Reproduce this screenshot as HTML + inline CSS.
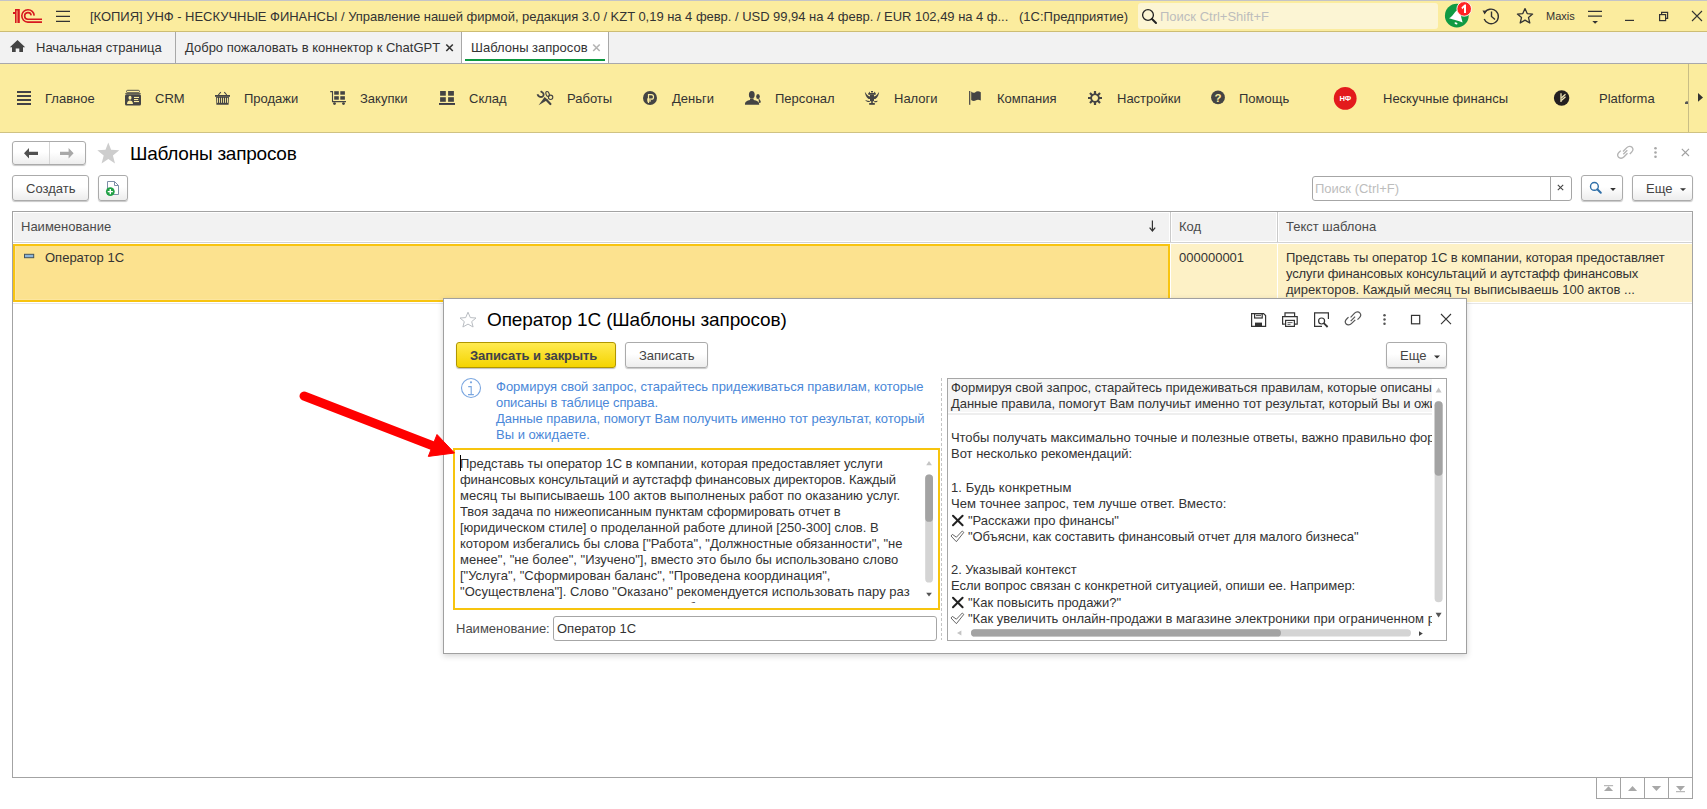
<!DOCTYPE html>
<html><head><meta charset="utf-8">
<style>
*{box-sizing:border-box;margin:0;padding:0}
html,body{width:1707px;height:809px;overflow:hidden;background:#fff;font-family:"Liberation Sans",sans-serif;font-size:13px;color:#333}
.a{position:absolute}
.t{position:absolute;white-space:nowrap;line-height:16px}
svg{position:absolute;overflow:visible}
.sec{position:absolute;top:90px;white-space:nowrap;line-height:16px;color:#333}
.btn{position:absolute;border:1px solid #ABABAB;border-radius:3px;background:linear-gradient(#FFFFFF 0%,#FFFFFF 45%,#EDEDED 100%);box-shadow:0 1px 1px rgba(0,0,0,.22)}
.ic{fill:#404040}
</style></head><body>
<!--TITLE-->
<div class="a" style="left:0;top:0;width:1707px;height:1px;background:#C4C4C8"></div>
<div class="a" style="left:0;top:1px;width:1707px;height:30px;background:#FBEC9E"></div>
<div class="a" style="left:0;top:31px;width:1707px;height:1px;background:#CDBD74"></div>
<svg width="1" height="1" style="left:0;top:0">
 <g fill="#D71920">
  <path d="M15 12.2 V23 H16.6 V10.4 H17.4 V23 H19.8 V9 H15 Z M13 12.1 H15 V14 H13 Z"/>
 </g>
 <g fill="none" stroke="#D71920" stroke-width="1.6">
  <path d="M34.2 15.6 A6.2 6.2 0 1 0 27.8 22.1 H42"/>
  <path d="M31.2 15.4 A3.3 3.3 0 1 0 27.8 19.2 H42"/>
 </g>
 <g stroke="#333" stroke-width="1.3">
  <path d="M56 11.4 H70 M56 16.4 H70 M56 21.4 H70"/>
 </g>
</svg>
<div class="t" style="left:90px;top:9px;color:#333;letter-spacing:-0.03px">[КОПИЯ] УНФ - НЕСКУЧНЫЕ ФИНАНСЫ / Управление нашей фирмой, редакция 3.0 / KZT 0,19 на 4 февр. / USD 99,94 на 4 февр. / EUR 102,49 на 4 ф...</div>
<div class="t" style="left:1019px;top:9px;color:#333">(1С:Предприятие)</div>
<div class="a" style="left:1138px;top:3px;width:300px;height:26px;background:#FCF5D4;border-radius:3px"></div>
<svg width="1" height="1" style="left:0;top:0">
 <circle cx="1148" cy="15" r="5.4" fill="none" stroke="#222" stroke-width="1.3"/>
 <path d="M1152 19 L1156 23" stroke="#222" stroke-width="2" stroke-linecap="round"/>
</svg>
<div class="t" style="left:1160px;top:9px;color:#BDBDBD">Поиск Ctrl+Shift+F</div>
<svg width="1" height="1" style="left:0;top:0">
 <circle cx="1456.8" cy="15.7" r="11.9" fill="#109A43"/>
 <path d="M1449 18.2 C1451.5 17.4 1453.2 14.6 1455 12.2 C1456 10.6 1458 9.8 1459.5 10.5 L1462.6 22.4 C1458.5 20.6 1453.5 19.6 1449 18.2 Z" fill="#fff"/>
 <ellipse cx="1456" cy="23.3" rx="1.6" ry="0.9" transform="rotate(22 1456 23.3)" fill="#fff"/>
 <circle cx="1464.2" cy="8.9" r="7.3" fill="#FF2222" stroke="#fff" stroke-width="0.9"/>
 <path d="M1461.4 7.6 L1464.6 4.6 H1466 V13 H1464 V7.6 L1462.3 9.2 Z" fill="#fff"/>
 <g fill="none" stroke="#333" stroke-width="1.4">
  <path d="M1484.6 13 A7.3 7.3 0 1 1 1484.2 19"/>
  <path d="M1491.5 11.5 V16.5 L1495 19.5"/>
 </g>
 <path d="M1482.5 10.5 L1486.8 10.8 L1484.6 14.5 Z" fill="#333"/>
 <path d="M1525 8.6 L1527.2 13.6 L1532.6 14.1 L1528.5 17.6 L1529.8 23 L1525 20.1 L1520.2 23 L1521.5 17.6 L1517.4 14.1 L1522.8 13.6 Z" fill="none" stroke="#333" stroke-width="1.3" stroke-linejoin="round"/>
 <g stroke="#333" stroke-width="1.2">
  <path d="M1588 11.4 H1602 M1588 16.2 H1602"/>
  <path d="M1625 20.4 H1634"/>
  <path d="M1692 11 L1702 21 M1702 11 L1692 21" stroke-width="1.1"/>
 </g>
 <path d="M1592.3 21 H1598 L1595.1 23.8 Z" fill="#333"/>
 <g fill="none" stroke="#333" stroke-width="1.2">
  <rect x="1659.6" y="14.6" width="6" height="6"/>
  <path d="M1661.6 14.6 V12.4 H1667.6 V18.4 H1665.6"/>
 </g>
</svg>
<div class="t" style="left:1546px;top:8px;font-size:11px;color:#333">Maxis</div>
<!--/TITLE-->
<!--TABS-->
<div class="a" style="left:0;top:32px;width:1707px;height:31px;background:#F2F2F2"></div>
<div class="a" style="left:0;top:63px;width:1707px;height:1px;background:#A8A8AC"></div>
<svg width="1" height="1" style="left:0;top:0">
 <path d="M17.5 40 L25.2 47.3 H23 V52 H19.3 V48.4 H15.7 V52 H12 V47.3 H9.8 Z" fill="#444"/>
</svg>
<div class="t" style="left:36px;top:40px;color:#333">Начальная страница</div>
<div class="a" style="left:175px;top:32px;width:1px;height:31px;background:#A8A8A8"></div>
<div class="t" style="left:185px;top:40px;color:#333">Добро пожаловать в коннектор к ChatGPT</div>
<svg width="1" height="1" style="left:0;top:0">
 <path d="M446.3 44.5 L452.8 51 M452.8 44.5 L446.3 51" stroke="#333" stroke-width="1.6"/>
</svg>
<div class="a" style="left:462px;top:32px;width:146px;height:31px;background:#fff"></div>
<div class="a" style="left:461px;top:32px;width:1px;height:31px;background:#A8A8A8"></div>
<div class="t" style="left:471px;top:40px;color:#333">Шаблоны запросов</div>
<svg width="1" height="1" style="left:0;top:0">
 <path d="M593.2 44.5 L599.7 51 M599.7 44.5 L593.2 51" stroke="#B4B4B4" stroke-width="1.6"/>
</svg>
<div class="a" style="left:465px;top:59px;width:140px;height:2px;background:#0D9840"></div>
<div class="a" style="left:608px;top:32px;width:1px;height:31px;background:#A8A8A8"></div>
<!--/TABS-->
<!--SECTIONS-->
<div class="a" style="left:0;top:64px;width:1707px;height:68px;background:#FBEC9E"></div>
<svg width="1" height="1" style="left:0;top:0">
 <g fill="#424246">
  <rect x="17" y="91" width="14" height="2"/><rect x="17" y="95" width="14" height="2"/><rect x="17" y="99" width="14" height="2"/><rect x="17" y="103" width="14" height="2"/>
 </g>
 <!-- CRM -->
 <g>
  <rect x="126.5" y="90.3" width="13" height="2.4" rx="1.2" fill="none" stroke="#444" stroke-width="0.9"/>
  <path d="M125.3 93.6 H140.7" stroke="#444" stroke-width="0.9"/>
  <rect x="125" y="94.2" width="16" height="11.4" rx="1.5" fill="#444"/>
  <ellipse cx="130" cy="97.8" rx="1.5" ry="2" fill="#FBEC9E"/>
  <path d="M127 104 C127 101.5 128.5 100.5 130 100.5 C131.5 100.5 133 101.5 133 104 Z" fill="#FBEC9E"/>
  <rect x="134" y="96.9" width="5" height="1.1" fill="#FBEC9E"/><rect x="134" y="99" width="4.2" height="1.1" fill="#FBEC9E"/><rect x="134" y="101" width="5" height="1.1" fill="#FBEC9E"/>
 </g>
 <!-- basket -->
 <g fill="#444">
  <path d="M218.3 95 L220.8 92.2 M224.3 92.2 L226.8 95" stroke="#444" stroke-width="1.1" fill="none"/>
  <rect x="215" y="95" width="15" height="1.8"/>
  <path d="M216.1 96.7 H228.9 L228.6 104.8 H216.4 Z"/>
  <g fill="#FBEC9E"><rect x="217" y="97.8" width="0.9" height="5"/><rect x="219" y="97.8" width="0.9" height="5"/><rect x="221" y="97.8" width="0.9" height="5"/><rect x="223.1" y="97.8" width="0.9" height="5"/><rect x="225.1" y="97.8" width="0.9" height="5"/><rect x="227.1" y="97.8" width="0.9" height="5"/></g>
 </g>
 <!-- cart -->
 <g fill="#444">
  <path d="M330.2 91.6 H332.5 V101.6 H346" stroke="#444" stroke-width="1.1" fill="none"/>
  <rect x="334.2" y="91.2" width="4.6" height="3.5"/><rect x="340.3" y="91.2" width="4.6" height="3.5"/>
  <rect x="334.2" y="96.2" width="4.6" height="3.5"/><rect x="340.3" y="96.2" width="4.6" height="3.5"/>
  <circle cx="334.5" cy="103.6" r="1.4"/><circle cx="343.5" cy="103.6" r="1.4"/>
 </g>
 <!-- sklad -->
 <g fill="#444">
  <rect x="440.1" y="91" width="5.7" height="4.7"/><rect x="448.1" y="91" width="5.8" height="4.7"/>
  <rect x="440.1" y="97.2" width="5.7" height="4.6"/><rect x="448.1" y="97.2" width="5.8" height="4.6"/>
  <rect x="439" y="103" width="16" height="1.9" fill="#3a3a44"/>
 </g>
 <!-- tools -->
 <g fill="none" stroke="#444">
  <path d="M537.5 94.2 C538 96.5 540.5 97.6 542.6 96.6 C544 95.5 544 93.5 542.5 92.5 L540.6 91.3" stroke-width="1.8"/>
  <ellipse cx="547.6" cy="94" rx="1.6" ry="2.6" stroke-width="1.1" transform="rotate(-20 547.6 94)"/>
  <circle cx="550.6" cy="97.3" r="2.2" stroke-width="1.1"/>
  <path d="M546.8 100.2 L550.4 104" stroke-width="2.2" stroke-linecap="round"/>
 </g>
 <path d="M538.6 105.2 L544.6 97 L547.8 99.8 Z" fill="#444"/>
 <!-- ruble -->
 <circle cx="650" cy="98" r="7" fill="#444"/>
 <g fill="none" stroke="#FBEC9E" stroke-width="1.2">
  <path d="M648.5 103 V94.6 H651.3 C654.3 94.6 654.3 99.2 651.3 99.2 H647"/>
  <path d="M647 100.9 H651"/>
 </g>
 <!-- personal -->
 <g fill="#444">
  <ellipse cx="758" cy="96.4" rx="1.8" ry="2.5"/>
  <path d="M758.5 98.5 C759.8 99.6 761 100.5 760.8 102.4 L759 103 Z"/>
  <ellipse cx="751.8" cy="94.8" rx="2.9" ry="3.8"/>
  <path d="M750 98.5 H753.6 V100 C757 100.6 759.5 101.8 759.2 104.8 H745 C744.8 101.8 747 100.6 750 100 Z"/>
 </g>
 <!-- eagle -->
 <g fill="#444">
  <rect x="871" y="91" width="2" height="1.4"/>
  <path d="M868.6 93.2 L869.3 91.6 L870.3 93.2 Z M873.7 93.2 L874.7 91.6 L875.5 93.2 Z"/>
  <rect x="868.3" y="93" width="7.4" height="1.8"/>
  <path d="M864.8 91.8 C865.2 94.5 866 97.5 868.6 99 L870 99 L870 96.6 C868 96 866.5 94.5 864.8 91.8 Z"/>
  <path d="M879.2 91.8 C878.8 94.5 878 97.5 875.4 99 L874 99 L874 96.6 C876 96 877.5 94.5 879.2 91.8 Z"/>
  <path d="M870 94.8 H874 V101.2 H870 Z"/>
  <path d="M865.2 100 C866.4 101.6 868 102.4 869.6 102 L870 101 C868.6 101 867 100.6 865.2 100 Z"/>
  <path d="M877.8 100.8 C877 102.2 875.8 102.6 874.4 102.2 L874 101.2 C875.4 101.2 876.6 101 877.8 100.8 Z"/>
  <rect x="869.2" y="103" width="5.6" height="1.8"/>
  <rect x="871.2" y="101" width="1.6" height="2.2"/>
 </g>
 <!-- flag -->
 <g fill="#444">
  <rect x="969.1" y="91" width="1.2" height="13.8"/>
  <path d="M971.2 91.4 C972.5 92.5 973.5 93 975 92.4 C976.5 91.2 978.5 90.8 980.8 92.2 V100.5 C978.5 99.4 977 99.6 975.5 100.6 C974 101.4 972.3 100.8 971.2 100 Z"/>
 </g>
 <!-- gear -->
 <g fill="#444">
  <path d="M1093.9 91 H1096.1 V93.4 L1097.5 94 L1099.3 92.3 L1100.8 93.8 L1099.1 95.6 L1099.7 97 H1102 V99.1 H1099.7 L1099.1 100.5 L1100.8 102.3 L1099.3 103.8 L1097.5 102.1 L1096.1 102.7 V104.9 H1093.9 V102.7 L1092.5 102.1 L1090.7 103.8 L1089.2 102.3 L1090.9 100.5 L1090.3 99.1 H1088 V97 H1090.3 L1090.9 95.6 L1089.2 93.8 L1090.7 92.3 L1092.5 94 L1093.9 93.4 Z M1095 95 A3 3 0 1 0 1095.01 95 Z" fill-rule="evenodd"/>
 </g>
 <!-- help -->
 <circle cx="1218" cy="97.4" r="6.9" fill="#444"/>
 <text x="1218" y="102" font-family="Liberation Sans" font-weight="bold" font-size="11.5" fill="#FBEC9E" text-anchor="middle">?</text>
 <!-- NF -->
 <circle cx="1345.2" cy="98.4" r="11.4" fill="#E31A1C"/>
 <text x="1345.3" y="101.3" font-family="Liberation Sans" font-weight="bold" font-size="7.5" fill="#fff" text-anchor="middle">НФ</text>
 <!-- platforma -->
 <circle cx="1561.6" cy="98" r="7.7" fill="#231F20"/>
 <g stroke="#F0E6B5" fill="none" stroke-width="1.3">
  <path d="M1561 93.2 V102"/>
  <path d="M1561.3 98 L1565.5 94.3 M1561.3 100.6 L1565.5 96.8"/>
 </g>
 <!-- right arrow & separator -->
 <rect x="1688" y="64" width="1" height="68" fill="#C9BD85"/>
 <path d="M1698 93 L1703 97.4 L1698 101.8 Z" fill="#333"/>
 <path d="M1685 103.5 A2 2 0 0 1 1688 101.5 V104 H1685 Z" fill="#555"/>
</svg>
<div class="sec" style="left:45px;top:91px">Главное</div>
<div class="sec" style="left:155px;top:91px">CRM</div>
<div class="sec" style="left:244px;top:91px">Продажи</div>
<div class="sec" style="left:360px;top:91px">Закупки</div>
<div class="sec" style="left:469px;top:91px">Склад</div>
<div class="sec" style="left:567px;top:91px">Работы</div>
<div class="sec" style="left:672px;top:91px">Деньги</div>
<div class="sec" style="left:775px;top:91px">Персонал</div>
<div class="sec" style="left:894px;top:91px">Налоги</div>
<div class="sec" style="left:997px;top:91px">Компания</div>
<div class="sec" style="left:1117px;top:91px">Настройки</div>
<div class="sec" style="left:1239px;top:91px">Помощь</div>
<div class="sec" style="left:1383px;top:91px">Нескучные финансы</div>
<div class="sec" style="left:1599px;top:91px">Platforma</div>
<!--/SECTIONS-->
<!--FORM-->
<div class="a" style="left:0;top:132px;width:1707px;height:1px;background:#CFC283"></div>
<!-- nav buttons -->
<div class="btn" style="left:12px;top:141px;width:74px;height:24px"></div>
<div class="a" style="left:49px;top:142px;width:1px;height:22px;background:#D6D6D6"></div>
<svg width="1" height="1" style="left:0;top:0">
 <path d="M24 153.3 L29 148 V151.7 H38 V154.9 H29 V158.6 Z" fill="#505050"/>
 <path d="M73.6 153.3 L68.6 148 V151.7 H60 V154.9 H68.6 V158.6 Z" fill="#A8A8A8"/>
 <path d="M108.3 142.4 L111.1 149.8 L119.3 150.3 L112.9 155.4 L115 163.4 L108.3 158.9 L101.6 163.4 L103.7 155.4 L97.3 150.3 L105.5 149.8 Z" fill="#CDCDCD"/>
</svg>
<div class="t" style="left:130px;top:143px;font-size:19px;line-height:22px;color:#000;letter-spacing:-0.24px">Шаблоны запросов</div>
<svg width="1" height="1" style="left:0;top:0">
 <g fill="none" stroke="#B4B4B4" stroke-width="1.3">
  <path d="M1623 151.5 L1626.8 147.6 C1628.4 146 1630.8 146 1632 147.3 C1633.2 148.6 1633 150.8 1631.5 152.3 L1629.8 154"/>
  <path d="M1627.5 153.2 L1623.8 157 C1622.2 158.6 1619.8 158.6 1618.6 157.3 C1617.4 156 1617.6 153.8 1619.1 152.3 L1620.8 150.6"/>
  <path d="M1623.3 154.2 L1627.3 150.2"/>
 </g>
 <g fill="#A8A8A8"><circle cx="1655.5" cy="148.2" r="1.3"/><circle cx="1655.5" cy="152.5" r="1.3"/><circle cx="1655.5" cy="156.8" r="1.3"/></g>
 <path d="M1681.8 148.8 L1689 156 M1689 148.8 L1681.8 156" stroke="#A0A0A0" stroke-width="1.1"/>
</svg>
<!-- toolbar -->
<div class="btn" style="left:12px;top:175px;width:77px;height:26px"></div>
<div class="t" style="left:26px;top:181px;color:#444">Создать</div>
<div class="btn" style="left:98px;top:175px;width:30px;height:26px"></div>
<svg width="1" height="1" style="left:0;top:0">
 <path d="M107.5 181.5 H114.5 L118.5 185.5 V194.5 H107.5 Z" fill="#fff" stroke="#7E8FA8" stroke-width="1"/>
 <path d="M114.5 181.5 V185.5 H118.5" fill="none" stroke="#7E8FA8" stroke-width="1"/>
 <circle cx="110.3" cy="191.6" r="4.4" fill="#1FA045"/>
 <path d="M110.3 189 V194.2 M107.7 191.6 H112.9" stroke="#fff" stroke-width="1.4"/>
</svg>
<!-- search -->
<div class="a" style="left:1312px;top:176px;width:260px;height:25px;border:1px solid #A6A6A6;border-radius:3px;background:#fff"></div>
<div class="a" style="left:1550px;top:177px;width:1px;height:23px;background:#A6A6A6"></div>
<div class="t" style="left:1315px;top:181px;color:#BDBDBD">Поиск (Ctrl+F)</div>
<svg width="1" height="1" style="left:0;top:0">
 <path d="M1557.8 184.8 L1563.2 190.2 M1563.2 184.8 L1557.8 190.2" stroke="#444" stroke-width="1.1"/>
</svg>
<div class="btn" style="left:1581px;top:175px;width:42px;height:26px"></div>
<svg width="1" height="1" style="left:0;top:0">
 <circle cx="1594.4" cy="186.4" r="3.9" fill="none" stroke="#2F6FA8" stroke-width="1.4"/>
 <path d="M1597.3 189.3 L1600.8 192.8" stroke="#2F6FA8" stroke-width="2" stroke-linecap="round"/>
 <path d="M1610.2 188 H1615.8 L1613 191 Z" fill="#333"/>
</svg>
<div class="btn" style="left:1632px;top:175px;width:61px;height:26px"></div>
<div class="t" style="left:1646px;top:181px;color:#444">Еще</div>
<svg width="1" height="1" style="left:0;top:0">
 <path d="M1680 188.2 H1686 L1683 191.1 Z" fill="#333"/>
</svg>
<!--/FORM-->
<!--TABLE-->
<div class="a" style="left:12px;top:211px;width:1681px;height:567px;border:1px solid #A3A3A3;background:#fff"></div>
<div class="a" style="left:14px;top:213px;width:1678px;height:28px;background:#F2F2F2"></div>
<div class="a" style="left:13px;top:242px;width:1679px;height:1px;background:#D2D2D2"></div>
<div class="a" style="left:1170px;top:212px;width:1px;height:30px;background:#CACACA"></div>
<div class="a" style="left:1169px;top:213px;width:1px;height:28px;background:#fff"></div>
<div class="a" style="left:1171px;top:213px;width:1px;height:28px;background:#fff"></div>
<div class="a" style="left:1277px;top:212px;width:1px;height:30px;background:#CACACA"></div>
<div class="a" style="left:1276px;top:213px;width:1px;height:28px;background:#fff"></div>
<div class="a" style="left:1278px;top:213px;width:1px;height:28px;background:#fff"></div>
<div class="t" style="left:21px;top:219px;color:#4A4A4A">Наименование</div>
<div class="t" style="left:1179px;top:219px;color:#4A4A4A">Код</div>
<div class="t" style="left:1286px;top:219px;color:#4A4A4A">Текст шаблона</div>
<svg width="1" height="1" style="left:0;top:0">
 <path d="M1152.4 220.6 V230" stroke="#333" stroke-width="1.2"/>
 <path d="M1149.6 227.6 L1152.4 231 L1155.2 227.6" fill="none" stroke="#333" stroke-width="1.2"/>
</svg>
<!-- row -->
<div class="a" style="left:13px;top:244px;width:1157px;height:58px;background:#FCE28F;border:2px solid #F8C410"></div>
<div class="a" style="left:15px;top:246px;width:1153px;height:54px;border:1px solid #FDE6A0;border-right:0;border-top:0"></div>
<div class="a" style="left:1171px;top:244px;width:521px;height:58px;background:#FDF1C6"></div>
<div class="a" style="left:1277px;top:244px;width:1px;height:58px;background:#fff"></div>
<div class="a" style="left:13px;top:303px;width:1679px;height:1px;background:#E6E6E6"></div>
<svg width="1" height="1" style="left:0;top:0">
 <rect x="24.5" y="254.3" width="9.2" height="3.4" fill="#8DB5DA" stroke="#44545E" stroke-width="1"/>
</svg>
<div class="t" style="left:45px;top:250px;color:#333">Оператор 1С</div>
<div class="t" style="left:1179px;top:250px;color:#333">000000001</div>
<div class="t" style="left:1286px;top:250px;color:#333;letter-spacing:-0.072px">Представь ты оператор 1С в компании, которая предоставляет</div>
<div class="t" style="left:1286px;top:266px;color:#333;letter-spacing:-0.117px">услуги финансовых консультаций и аутстафф финансовых</div>
<div class="t" style="left:1286px;top:282px;color:#333">директоров. Каждый месяц ты выписываешь 100 актов ...</div>
<!-- bottom nav -->
<div class="a" style="left:1596px;top:777px;width:97px;height:22px;border:1px solid #A3A3A3;background:#fff"></div>
<div class="a" style="left:1620px;top:777px;width:1px;height:21px;background:#A3A3A3"></div>
<div class="a" style="left:1644px;top:777px;width:1px;height:21px;background:#A3A3A3"></div>
<div class="a" style="left:1668px;top:777px;width:1px;height:21px;background:#A3A3A3"></div>
<svg width="1" height="1" style="left:0;top:0">
 <g fill="#A8A8A8">
  <rect x="1604" y="785.2" width="9.1" height="1"/>
  <path d="M1604 791 L1608.55 786.3 L1613.1 791 Z"/>
  <path d="M1628 791 L1632.55 786 L1637.1 791 Z"/>
  <path d="M1651.8 786 L1661.1 786 L1656.45 791 Z"/>
  <path d="M1676 786 L1685 786 L1680.5 791 Z"/>
  <rect x="1676" y="791.2" width="9" height="1"/>
 </g>
</svg>
<!--/TABLE-->
<!--DIALOG-->
<div class="a" style="left:443px;top:298px;width:1024px;height:356px;background:#fff;border:1px solid #A0A0A0;box-shadow:0 2px 6px rgba(0,0,0,.17)"></div>
<svg width="1" height="1" style="left:0;top:0">
 <path d="M468 312.2 L470.3 317.6 L476 318 L471.7 321.6 L473.1 327 L468 324.1 L462.9 327 L464.3 321.6 L460 318 L465.7 317.6 Z" fill="none" stroke="#B9BDC2" stroke-width="1" stroke-linejoin="round"/>
</svg>
<div class="t" style="left:487px;top:309px;font-size:19px;line-height:22px;color:#000;letter-spacing:-0.14px">Оператор 1С (Шаблоны запросов)</div>
<svg width="1" height="1" style="left:0;top:0">
 <!-- save -->
 <g fill="none" stroke="#333" stroke-width="1.2">
  <path d="M1251.6 313.6 H1263.6 L1265.6 315.6 V326.4 H1251.6 Z"/>
  <rect x="1254.6" y="313.6" width="7.6" height="4.4"/>
 </g>
 <rect x="1255" y="322.6" width="7" height="3.8" fill="#333"/>
 <rect x="1256" y="315.2" width="5" height="0.9" fill="#333"/>
 <!-- print -->
 <g fill="none" stroke="#333" stroke-width="1.2">
  <path d="M1285 316 V312.8 H1294.6 V316"/>
  <path d="M1284.8 324.2 H1282.6 V316.6 H1297.2 V324.2 H1295"/>
  <rect x="1285.6" y="320.4" width="8.8" height="6"/>
 </g>
 <path d="M1287.5 322.6 H1292.5 M1287.5 324.4 H1290.5" stroke="#333" stroke-width="0.8"/>
 <!-- preview -->
 <g fill="none" stroke="#333" stroke-width="1.2">
  <path d="M1322 326.4 H1314.6 V312.8 H1328.4 V319"/>
  <circle cx="1321.6" cy="321" r="3"/>
 </g>
 <path d="M1323.8 323.2 L1327.6 327" stroke="#333" stroke-width="1.8"/>
 <!-- link -->
 <g fill="none" stroke="#555" stroke-width="1.2">
  <path d="M1350.6 317.3 L1354.6 313.2 C1356.2 311.6 1358.6 311.6 1359.8 312.9 C1361 314.2 1360.8 316.4 1359.3 317.9 L1357.5 319.7"/>
  <path d="M1355.3 319.8 L1351.4 323.7 C1349.8 325.3 1347.4 325.3 1346.2 324 C1345 322.7 1345.2 320.5 1346.7 319 L1348.5 317.2"/>
  <path d="M1350.7 321.1 L1355.1 316.7"/>
 </g>
 <g fill="#555"><circle cx="1384.5" cy="315.2" r="1.25"/><circle cx="1384.5" cy="319.5" r="1.25"/><circle cx="1384.5" cy="323.8" r="1.25"/></g>
 <rect x="1411.5" y="315.4" width="8.2" height="8.4" fill="none" stroke="#333" stroke-width="1.2"/>
 <path d="M1441 314 L1451 324.2 M1451 314 L1441 324.2" stroke="#333" stroke-width="1.1"/>
</svg>
<!-- buttons -->
<div class="a" style="left:456px;top:342px;width:160px;height:26px;border:1px solid #B09600;border-radius:3px;background:linear-gradient(#FFEA50,#F4D400);box-shadow:0 1px 1px rgba(0,0,0,.25)"></div>
<div class="t" style="left:470px;top:348px;font-weight:bold;color:#40404a;letter-spacing:-0.1px">Записать и закрыть</div>
<div class="btn" style="left:625px;top:342px;width:83px;height:26px"></div>
<div class="t" style="left:639px;top:348px;color:#444">Записать</div>
<div class="btn" style="left:1386px;top:342px;width:61px;height:26px"></div>
<div class="t" style="left:1400px;top:348px;color:#444">Еще</div>
<svg width="1" height="1" style="left:0;top:0">
 <path d="M1434 355.5 H1440 L1437 358.5 Z" fill="#333"/>
</svg>
<!-- info -->
<svg width="1" height="1" style="left:0;top:0">
 <circle cx="471" cy="388" r="9.5" fill="none" stroke="#7AA6E0" stroke-width="1.1"/>
 <circle cx="471" cy="382.3" r="1.1" fill="#7AA6E0"/>
 <path d="M468.2 386.6 H471.2 V394.4 M468 394.6 H473.9" fill="none" stroke="#7AA6E0" stroke-width="1.1"/>
</svg>
<div class="t" style="left:496px;top:379px;color:#4A87D8">Формируя свой запрос, старайтесь придеживаться правилам, которые</div>
<div class="t" style="left:496px;top:395px;color:#4A87D8;letter-spacing:-0.1px">описаны в таблице справа.</div>
<div class="t" style="left:496px;top:411px;color:#4A87D8;letter-spacing:-0.04px">Данные правила, помогут Вам получить именно тот результат, который</div>
<div class="t" style="left:496px;top:427px;color:#4A87D8">Вы и ожидаете.</div>
<!-- left textarea -->
<div class="a" style="left:453px;top:448px;width:487px;height:162px;border:2px solid #F7C40E;background:#fff"></div>
<div class="a" style="left:460px;top:451px;width:462px;height:152px;overflow:hidden">
 <div class="t" style="left:0;top:5px;color:#333;letter-spacing:-0.042px">Представь ты оператор 1С в компании, которая предоставляет услуги</div>
 <div class="t" style="left:0;top:21px;color:#333;letter-spacing:-0.122px">финансовых консультаций и аутстафф финансовых директоров. Каждый</div>
 <div class="t" style="left:0;top:37px;color:#333">месяц ты выписываешь 100 актов выполненых работ по оказанию услуг.</div>
 <div class="t" style="left:0;top:53px;color:#333;letter-spacing:-0.068px">Твоя задача по нижеописанным пунктам сформировать отчет в</div>
 <div class="t" style="left:0;top:69px;color:#333;letter-spacing:-0.027px">[юридическом стиле] о проделанной работе длиной [250-300] слов. В</div>
 <div class="t" style="left:0;top:85px;color:#333;letter-spacing:-0.025px">котором избегались бы слова ["Работа", "Должностные обязанности", "не</div>
 <div class="t" style="left:0;top:101px;color:#333">менее", "не более", "Изучено"], вместо это было бы использовано слово</div>
 <div class="t" style="left:0;top:117px;color:#333">["Услуга", "Сформирован баланс", "Проведена координация",</div>
 <div class="t" style="left:0;top:133px;color:#333;letter-spacing:0.051px">"Осуществлена"]. Слово "Оказано" рекомендуется использовать пару раз</div>
 <div class="t" style="left:0;top:149px;color:#333">в отчете. Фраза "Выполнено" должна быть заменена на "Оказано", так</div>
</div>
<div class="a" style="left:460px;top:455px;width:1px;height:16px;background:#000"></div>
<svg width="1" height="1" style="left:0;top:0">
 <path d="M926.2 465.2 L929 461 L931.9 465.2 Z" fill="#C4C4C4"/>
 <rect x="925.2" y="474.6" width="7.8" height="108" rx="3.9" fill="#D4D4D4"/>
 <rect x="925.2" y="474.6" width="7.8" height="47.2" rx="3.9" fill="#A3A3A3"/>
 <path d="M926.2 592.7 L931.9 592.7 L929 596.6 Z" fill="#555"/>
</svg>
<div class="t" style="left:456px;top:621px;color:#4A4A4A">Наименование:</div>
<div class="a" style="left:553px;top:616px;width:384px;height:25px;border:1px solid #A6A6A6;border-radius:3px;background:#fff"></div>
<div class="t" style="left:557px;top:621px;color:#333">Оператор 1С</div>
<!-- dashed divider -->
<div class="a" style="left:941px;top:378px;width:1px;height:262px;background:repeating-linear-gradient(#C4C4C4 0 3px,transparent 3px 5px)"></div>
<!-- right textarea -->
<div class="a" style="left:947px;top:378px;width:500px;height:263px;border:1px solid #A6A6A6;background:#fff"></div>
<div class="a" style="left:948px;top:379px;width:484px;height:33px;background:#F6F6F6"></div>
<div class="a" style="left:948px;top:413px;width:484px;height:2px;background:#EEEEEE"></div>
<div class="a" style="left:948px;top:379px;width:484px;height:248px;overflow:hidden">
 <div class="t" style="left:3px;top:1px;color:#333;letter-spacing:-0.03px">Формируя свой запрос, старайтесь придеживаться правилам, которые описаны в таблице справа.</div>
 <div class="t" style="left:3px;top:17px;color:#333;letter-spacing:-0.045px">Данные правила, помогут Вам получиьт именно тот результат, который Вы и ожидаете.</div>
 <div class="t" style="left:3px;top:51px;color:#333;letter-spacing:-0.05px">Чтобы получать максимально точные и полезные ответы, важно правильно формулировать запрос.</div>
 <div class="t" style="left:3px;top:67px;color:#333">Вот несколько рекомендаций:</div>
 <div class="t" style="left:3px;top:101px;color:#333;letter-spacing:0.14px">1. Будь конкретным</div>
 <div class="t" style="left:3px;top:117px;color:#333">Чем точнее запрос, тем лучше ответ. Вместо:</div>
 <div class="t" style="left:20px;top:134px;color:#333">"Расскажи про финансы"</div>
 <div class="t" style="left:20px;top:150px;color:#333;letter-spacing:-0.055px">"Объясни, как составить финансовый отчет для малого бизнеса"</div>
 <div class="t" style="left:3px;top:183px;color:#333;letter-spacing:-0.065px">2. Указывай контекст</div>
 <div class="t" style="left:3px;top:199px;color:#333">Если вопрос связан с конкретной ситуацией, опиши ее. Например:</div>
 <div class="t" style="left:20px;top:216px;color:#333">"Как повысить продажи?"</div>
 <div class="t" style="left:20px;top:232px;color:#333">"Как увеличить онлайн-продажи в магазине электроники при ограниченном рекламном бюджете?"</div>
</div>
<svg width="1" height="1" style="left:0;top:0">
<path d="M953 515.8 L962.6 525.2 M962.6 515.8 L953 525.2" stroke="#222" stroke-width="2" stroke-linecap="round"/>
<path d="M951 536.0 L956.4 541.7 L963.8 532.4 L962.3 531.0 L956.4 537.2 L952.4 534.4 Z" fill="none" stroke="#555" stroke-width="0.9" stroke-linejoin="round"/>
<path d="M953 597.8 L962.6 607.2 M962.6 597.8 L953 607.2" stroke="#222" stroke-width="2" stroke-linecap="round"/>
<path d="M951 618.0 L956.4 623.7 L963.8 614.4 L962.3 613.0 L956.4 619.2 L952.4 616.4 Z" fill="none" stroke="#555" stroke-width="0.9" stroke-linejoin="round"/>
</svg>
<svg width="1" height="1" style="left:0;top:0">
 <path d="M1435.6 392.5 L1438.6 387.6 L1441.6 392.5 Z" fill="#C4C4C4"/>
 <rect x="1434.6" y="401.2" width="8" height="201" rx="4" fill="#D4D4D4"/>
 <rect x="1434.6" y="401.2" width="8" height="74.5" rx="4" fill="#A3A3A3"/>
 <path d="M1435.6 612.8 L1441.6 612.8 L1438.6 617.6 Z" fill="#555"/>
 <path d="M961.4 630.5 L957 633 L961.4 635.5 Z" fill="#C4C4C4"/>
 <rect x="971" y="629.2" width="440" height="7.4" rx="3.7" fill="#D4D4D4"/>
 <rect x="971" y="629.2" width="310" height="7.4" rx="3.7" fill="#A3A3A3"/>
 <path d="M1419 631.2 L1422.8 633.6 L1419 636 Z" fill="#444"/>
</svg>
<!-- red arrow -->
<svg width="1" height="1" style="left:0;top:0">
 <path d="M304 396 L436 447" stroke="#FF0000" stroke-width="9" stroke-linecap="round"/>
 <path d="M454.5 453 L437 434.5 L428.3 456.4 Z" fill="#FF0000" stroke="#FF0000" stroke-width="1" stroke-linejoin="round"/>
</svg>
<!--/DIALOG-->
</body></html>
